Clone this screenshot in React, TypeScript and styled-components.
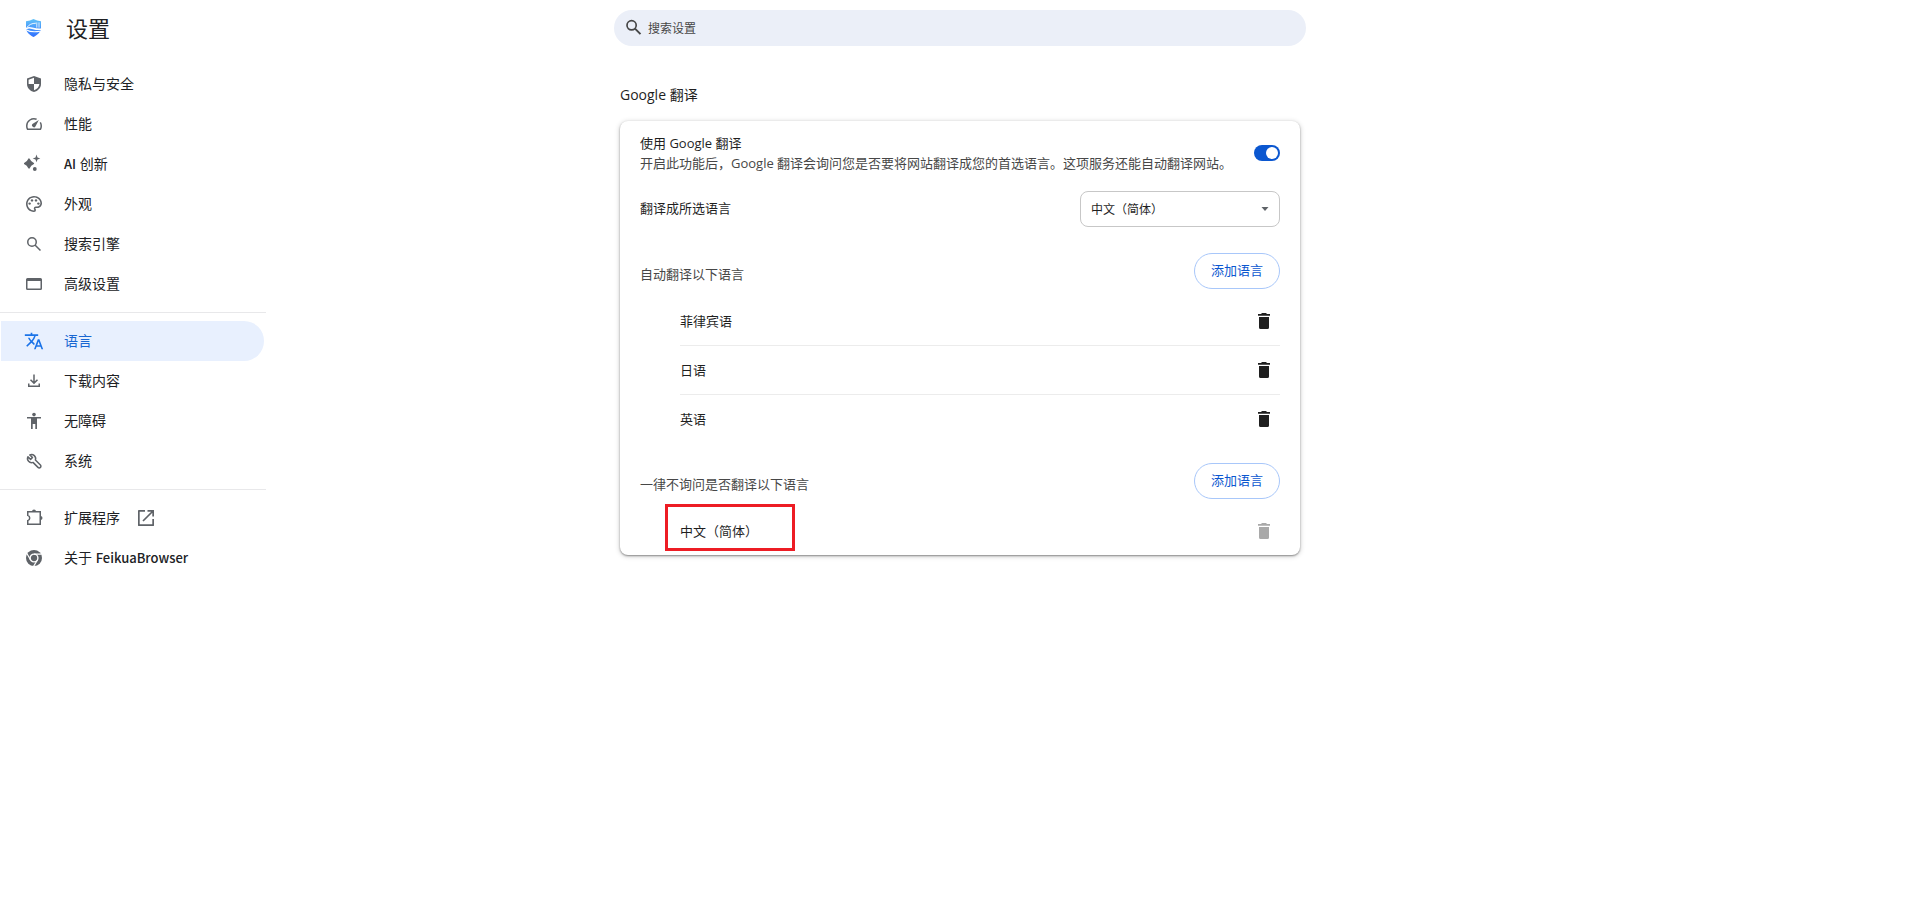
import React, { useState } from "react";
import styled, { createGlobalStyle, css } from "styled-components";

const GlobalStyle = createGlobalStyle`
  *, *::before, *::after { box-sizing: border-box; }
  body {
    margin: 0;
    background: #fff;
    color: #1f1f1f;
    font-family: "Open Sans", "Noto Sans CJK SC", sans-serif;
    font-size: 13px;
    line-height: 20px;
  }
  button, input, select { font: inherit; }
`;

const Page = styled.div`
  display: grid;
  grid-template-columns: 266px minmax(0, 1fr) 266px;
  min-height: 100vh;
`;

const Sidebar = styled.aside`
  display: flex;
  flex-direction: column;
`;

const Brand = styled.header`
  display: flex;
  align-items: center;
  gap: 22px;
  height: 56px;
  padding-left: 24px;
  margin-bottom: 8px;
`;

const BrandTitle = styled.h1`
  margin: 0;
  font-size: 22px;
  line-height: 32px;
  font-weight: 400;
  color: #202124;
`;

const Menu = styled.nav`
  display: flex;
  flex-direction: column;
`;

const MenuItem = styled.a<{ $active?: boolean }>`
  display: flex;
  align-items: center;
  gap: 20px;
  height: 40px;
  margin: 0 2px 0 1px;
  padding-left: 23px;
  border-radius: 0 20px 20px 0;
  font-size: 14px;
  text-decoration: none;
  color: #202124;
  & svg { color: #5f6368; }
  ${({ $active }) =>
    $active &&
    css`
      background: #e8f0fe;
      color: #1967d2;
      & svg { color: #1a73e8; }
    `}
`;

const MenuLabel = styled.span`
  display: flex;
  align-items: center;
  gap: 16px;
`;

const Latin = styled.span`
  font-family: "Noto Sans CJK SC", sans-serif;
  font-size: 13px;
  line-height: 1;
  font-weight: 500;
`;

const MenuDivider = styled.hr`
  width: 100%;
  height: 1px;
  margin: 8px 0;
  border: 0;
  background: #e8e8ea;
`;

const Glyph = styled.svg`
  display: block;
  flex: none;
  width: 20px;
  height: 20px;
  fill: currentColor;
`;

const Main = styled.main`
  display: flex;
  flex-direction: column;
  align-items: center;
`;

const SearchBar = styled.label`
  display: flex;
  align-items: center;
  gap: 4px;
  width: 100%;
  max-width: 692px;
  height: 36px;
  margin-top: 10px;
  padding: 0 16px 0 10px;
  border-radius: 18px;
  background: #ebeff8;
  color: #474747;
`;

const SearchInput = styled.input`
  flex: 1;
  min-width: 0;
  padding: 2px 0 0;
  border: 0;
  outline: 0;
  background: transparent;
  font-size: 12px;
  color: #1f1f1f;
  &::placeholder { color: #474747; opacity: 1; }
`;

const Section = styled.section`
  width: 100%;
  max-width: 680px;
  padding-bottom: 40px;
`;

const SectionTitle = styled.h2`
  margin: 39px 0 16px;
  font-size: 14px;
  line-height: 20px;
  font-weight: 400;
`;

const Card = styled.div`
  border-radius: 8px;
  background: #fff;
  box-shadow: 0 1px 2px rgba(0, 0, 0, 0.4), 0 1px 5px 1px rgba(0, 0, 0, 0.14);
`;

const Row = styled.div<{ $tall?: boolean }>`
  display: flex;
  align-items: center;
  justify-content: space-between;
  min-height: ${({ $tall }) => ($tall ? 64 : 48)}px;
  padding: 0 20px;
  & > label { padding-bottom: ${({ $tall }) => ($tall ? 0 : 2)}px; }
`;

const RowLabel = styled.label`
  display: block;
`;

const Secondary = styled.span`
  display: block;
  color: #474747;
`;

const Switch = styled.input`
  appearance: none;
  display: flex;
  align-items: center;
  justify-content: flex-start;
  flex: none;
  width: 26px;
  height: 16px;
  margin: 0;
  padding: 0 2px;
  border-radius: 8px;
  background: #747775;
  cursor: pointer;
  &::before {
    content: "";
    width: 12px;
    height: 12px;
    border-radius: 50%;
    background: #fff;
  }
  &:checked {
    justify-content: flex-end;
    background: #0b57d0;
  }
`;

const SelectFrame = styled.span`
  display: grid;
  align-items: center;
  width: 200px;
  & > * { grid-area: 1 / 1; }
  & > svg {
    justify-self: end;
    margin-right: 5px;
    color: #5f6368;
    pointer-events: none;
  }
`;

const Select = styled.select`
  appearance: none;
  width: 100%;
  height: 36px;
  padding: 2px 28px 0 10px;
  border: 1px solid #c7c7c7;
  border-radius: 8px;
  background: #fff;
  font-size: 12px;
  color: #1f1f1f;
`;

const ListHeader = styled.div`
  display: flex;
  align-items: center;
  justify-content: space-between;
  padding: 20px 20px 8px;
`;

const ListTitle = styled.h3`
  margin: 0;
  padding-top: 6px;
  font-size: 13px;
  font-weight: 400;
  color: #474747;
`;

const AddButton = styled.button`
  height: 36px;
  padding: 0 16px 2px;
  border: 1px solid #a8c7fa;
  border-radius: 18px;
  background: #fff;
  color: #0b57d0;
  cursor: pointer;
`;

const LanguageList = styled.ul`
  margin: 0 20px 0 60px;
  padding: 0;
  list-style: none;
`;

const LanguageRow = styled.li`
  position: relative;
  display: flex;
  align-items: center;
  justify-content: space-between;
  & + & { border-top: 1px solid #ececec; }
`;

const LanguageName = styled.span`
  line-height: 48px;
`;

const IconButton = styled.button`
  display: flex;
  align-items: center;
  justify-content: center;
  width: 32px;
  height: 32px;
  padding: 0;
  border: 0;
  border-radius: 50%;
  background: transparent;
  color: #1f1f1f;
  &:disabled { opacity: 0.38; }
`;

const Highlight = styled.span`
  position: absolute;
  top: -3px;
  left: -15px;
  width: 130px;
  height: 47px;
  border: 3px solid #ed1c24;
  pointer-events: none;
`;

const line = { fill: "none", stroke: "currentColor", strokeWidth: 1.5 };

const icons = {
  privacy: (
    <path
      fillRule="evenodd"
      d="M10 2l7 2.6v5.3c0 3.8-2.9 7-7 8.1-4.100-1.100-7-4.300-7-8.100V4.600zM10 3.700L4.600 5.700V10H10zM10 10v6.300c2.800-.9 5.200-3.300 5.400-6.300z"
    />
  ),
  performance: (
    <>
      <path {...line} strokeLinejoin="round" d="M12.600 5.200A7.250 7.250 0 0 0 2.750 12C2.750 13.400 3 14.300 3.600 15.250H16.400C17 14.300 17.250 13.400 17.250 12A7.250 7.250 0 0 0 16.300 8.400" />
      <path d="M14.800 5.900L11.700 12.100a1.900 1.900 0 1 1-2.900-2.300z" />
    </>
  ),
  ai: (
    <>
      <path d="M5 5.300Q6.200 8.300 9.200 9.500Q6.200 10.700 5 13.700Q3.800 10.700 .8 9.500Q3.800 8.300 5 5.300z" stroke="currentColor" strokeWidth="1.800" strokeLinejoin="round" />
      <path d="M12.500 .6L13.500 3.400L16.300 4.400L13.500 5.400L12.500 8.200L11.500 5.400L8.700 4.400L11.500 3.400z" />
      <circle cx="10.800" cy="15" r="1.900" />
    </>
  ),
  appearance: (
    <g transform="translate(.4 .4) scale(.8)">
      <path d="M12 22C6.490 22 2 17.510 2 12S6.490 2 12 2s10 4.040 10 9c0 3.310-2.690 6-6 6h-1.770c-.28 0-.5.22-.5.5 0 .12.050.23.130.33.410.47.640 1.060.640 1.670A2.500 2.500 0 0 1 12 22zm0-18c-4.410 0-8 3.590-8 8s3.590 8 8 8c.28 0 .5-.22.5-.5a.54.54 0 0 0-.14-.35c-.41-.46-.63-1.050-.63-1.650a2.500 2.500 0 0 1 2.500-2.500H16c2.210 0 4-1.790 4-4 0-3.860-3.590-7-8-7z" />
      <circle cx="6.500" cy="11.500" r="1.500" />
      <circle cx="9.500" cy="7.500" r="1.500" />
      <circle cx="14.500" cy="7.500" r="1.500" />
      <circle cx="17.500" cy="11.500" r="1.500" />
    </g>
  ),
  search: (
    <>
      <circle cx="8" cy="8" r="4.250" {...line} />
      <path {...line} d="M11 11L16.500 16.500" />
    </>
  ),
  searchBold: (
    <g fill="none" stroke="currentColor">
      <circle cx="7.600" cy="7.300" r="4.600" strokeWidth="1.700" />
      <path strokeWidth="2" d="M11 10.600L16.500 16.100" />
    </g>
  ),
  advanced: <path fillRule="evenodd" d="M3.500 4h13A1.500 1.500 0 0 1 18 5.500v9a1.500 1.500 0 0 1-1.500 1.500h-13A1.500 1.500 0 0 1 2 14.500v-9A1.500 1.500 0 0 1 3.500 4zM3.500 7v7.500h13V7z" />,
  language: (
    <path
      transform="scale(.8333)"
      d="M12.870 15.070l-2.540-2.510.03-.03A17.520 17.520 0 0 0 14.070 6H17V4h-7V2H8v2H1v1.990h11.170C11.500 7.920 10.440 9.750 9 11.350 8.070 10.320 7.300 9.190 6.690 8h-2c.73 1.630 1.730 3.170 2.980 4.560l-5.090 5.020L4 19l5-5 3.110 3.110.76-2.040zM18.500 10h-2L12 22h2l1.120-3h4.750L21 22h2l-4.500-12zm-2.620 7l1.620-4.330L19.120 17h-3.240z"
    />
  ),
  download: (
    <>
      <path {...line} d="M10 3.500V11.500M6.500 8.700L10 12.100L13.500 8.700" />
      <path {...line} d="M4.750 12.500V15.250H15.250V12.500" />
    </>
  ),
  accessibility: (
    <>
      <circle cx="10" cy="3.600" r="1.800" />
      <path d="M3 6h14v1.500h-4V18h-1.700v-5H8.700v5H7V7.500H3z" />
    </>
  ),
  system: (
    <path
      {...line}
      strokeLinejoin="round"
      d="M5.800 3.900A4.100 4.100 0 0 1 11.400 9L16.400 14A1.500 1.500 0 0 1 14 16.400L9 11.400A4.100 4.100 0 0 1 3.900 5.800L6.600 8.400L8.500 6.500z"
    />
  ),
  extensions: (
    <>
      <path {...line} d="M3.750 3.750H16.250V16.250H3.750V12.600A2.700 2.700 0 0 0 3.750 7.400z" />
      <path d="M8 3.500a2 2 0 0 1 4 0zM16.500 8a2 2 0 0 1 0 4z" />
    </>
  ),
  about: (
    <>
      <circle cx="10" cy="10" r="8" />
      <g fill="none" stroke="#fff">
        <circle cx="10" cy="10" r="3.900" strokeWidth="1.400" />
        <path strokeWidth="1.200" d="M10 6.100H17.500M6.600 12L2.900 5.500M13.400 12L9.600 18.400" />
      </g>
    </>
  ),
  external: (
    <g fill="none" stroke="currentColor" strokeWidth="1.700">
      <path strokeLinejoin="round" d="M9 2.850H2.850V17.150H17.150V11" />
      <path d="M11.500 2.850H17.150V8.500M17 3L7 13" />
    </g>
  ),
  trash: <path d="M8 2h4l1 1h3v1.800H4V3h3zM5 6h10v10.500a1.500 1.500 0 0 1-1.500 1.500h-7A1.500 1.500 0 0 1 5 16.500z" />,
  arrow: <path d="M6.500 8h7L10 12z" />,
};

type IconName = keyof typeof icons;

const Icon = ({ name }: { name: IconName }) => (
  <Glyph viewBox="0 0 20 20" aria-hidden="true">
    {icons[name]}
  </Glyph>
);

const Logo = () => (
  <Glyph viewBox="0 0 20 20" aria-hidden="true">
    <defs>
      <linearGradient id="shield" x1="0" y1="0" x2="0" y2="1">
        <stop offset="0" stopColor="#62c2f7" />
        <stop offset="1" stopColor="#3070ff" />
      </linearGradient>
    </defs>
    <path fill="url(#shield)" d="M9.500 1Q13 3 17 3.300V10C17 14 13.500 17 9.500 19C5.500 17 2 14 2 10V3.300Q6 3 9.500 1z" />
    <g fill="none" stroke="#fff" strokeLinecap="round">
      <path strokeWidth=".9" d="M3 9.300C5 6.500 8 5.300 11.500 5.200" />
      <path strokeWidth=".8" d="M12.800 4.800V9.300M15 4.800V9.300" />
      <path strokeWidth="1.500" d="M2.200 10.800C6 7.500 8 11.800 16.800 11.300" />
      <path strokeWidth="1.100" d="M2.500 12C6 14 10 14.300 16 13.300" />
    </g>
  </Glyph>
);

type Entry = { label: string; latin?: "before" | "after"; name?: string; icon: IconName; external?: boolean };

const menuGroups: Entry[][] = [
  [
    { label: "隐私与安全", icon: "privacy" },
    { label: "性能", icon: "performance" },
    { label: " 创新", latin: "before", name: "AI", icon: "ai" },
    { label: "外观", icon: "appearance" },
    { label: "搜索引擎", icon: "search" },
    { label: "高级设置", icon: "advanced" },
  ],
  [
    { label: "语言", icon: "language" },
    { label: "下载内容", icon: "download" },
    { label: "无障碍", icon: "accessibility" },
    { label: "系统", icon: "system" },
  ],
  [
    { label: "扩展程序", icon: "extensions", external: true },
    { label: "关于 ", latin: "after", name: "FeikuaBrowser", icon: "about" },
  ],
];

const LanguageGroup = ({
  title,
  languages,
  locked,
}: {
  title: string;
  languages: string[];
  locked?: boolean;
}) => (
  <>
    <ListHeader>
      <ListTitle>{title}</ListTitle>
      <AddButton type="button">添加语言</AddButton>
    </ListHeader>
    <LanguageList>
      {languages.map((name) => (
        <LanguageRow key={name}>
          <LanguageName>{name}</LanguageName>
          <IconButton type="button" disabled={locked} aria-label={`移除${name}`}>
            <Icon name="trash" />
          </IconButton>
          {locked && <Highlight />}
        </LanguageRow>
      ))}
    </LanguageList>
  </>
);

export default function App() {
  const [enabled, setEnabled] = useState(true);

  return (
    <>
      <GlobalStyle />
      <Page>
        <Sidebar>
          <Brand>
            <Logo />
            <BrandTitle>设置</BrandTitle>
          </Brand>
          <Menu>
            {menuGroups.map((group, index) => (
              <React.Fragment key={group[0].label}>
                {index > 0 && <MenuDivider />}
                {group.map((item) => (
                  <MenuItem key={item.label} href="#" $active={item.icon === "language"}>
                    <Icon name={item.icon} />
                    <MenuLabel>
                      <span>
                        {item.latin === "before" && <Latin>{item.name}</Latin>}
                        {item.label}
                        {item.latin === "after" && <Latin>{item.name}</Latin>}
                      </span>
                      {item.external && <Icon name="external" />}
                    </MenuLabel>
                  </MenuItem>
                ))}
              </React.Fragment>
            ))}
          </Menu>
        </Sidebar>
        <Main>
          <SearchBar>
            <Icon name="searchBold" />
            <SearchInput type="search" placeholder="搜索设置" aria-label="搜索设置" />
          </SearchBar>
          <Section>
            <SectionTitle>Google 翻译</SectionTitle>
            <Card>
              <Row $tall>
                <RowLabel htmlFor="use-translate">
                  使用 Google 翻译
                  <Secondary>
                    开启此功能后，Google 翻译会询问您是否要将网站翻译成您的首选语言。这项服务还能自动翻译网站。
                  </Secondary>
                </RowLabel>
                <Switch
                  id="use-translate"
                  type="checkbox"
                  role="switch"
                  checked={enabled}
                  onChange={(event) => setEnabled(event.target.checked)}
                />
              </Row>
              <Row>
                <RowLabel htmlFor="target-language">翻译成所选语言</RowLabel>
                <SelectFrame>
                  <Select id="target-language">
                    <option>中文（简体）</option>
                  </Select>
                  <Icon name="arrow" />
                </SelectFrame>
              </Row>
              <LanguageGroup title="自动翻译以下语言" languages={["菲律宾语", "日语", "英语"]} />
              <LanguageGroup title="一律不询问是否翻译以下语言" languages={["中文（简体）"]} locked />
            </Card>
          </Section>
        </Main>
      </Page>
    </>
  );
}
